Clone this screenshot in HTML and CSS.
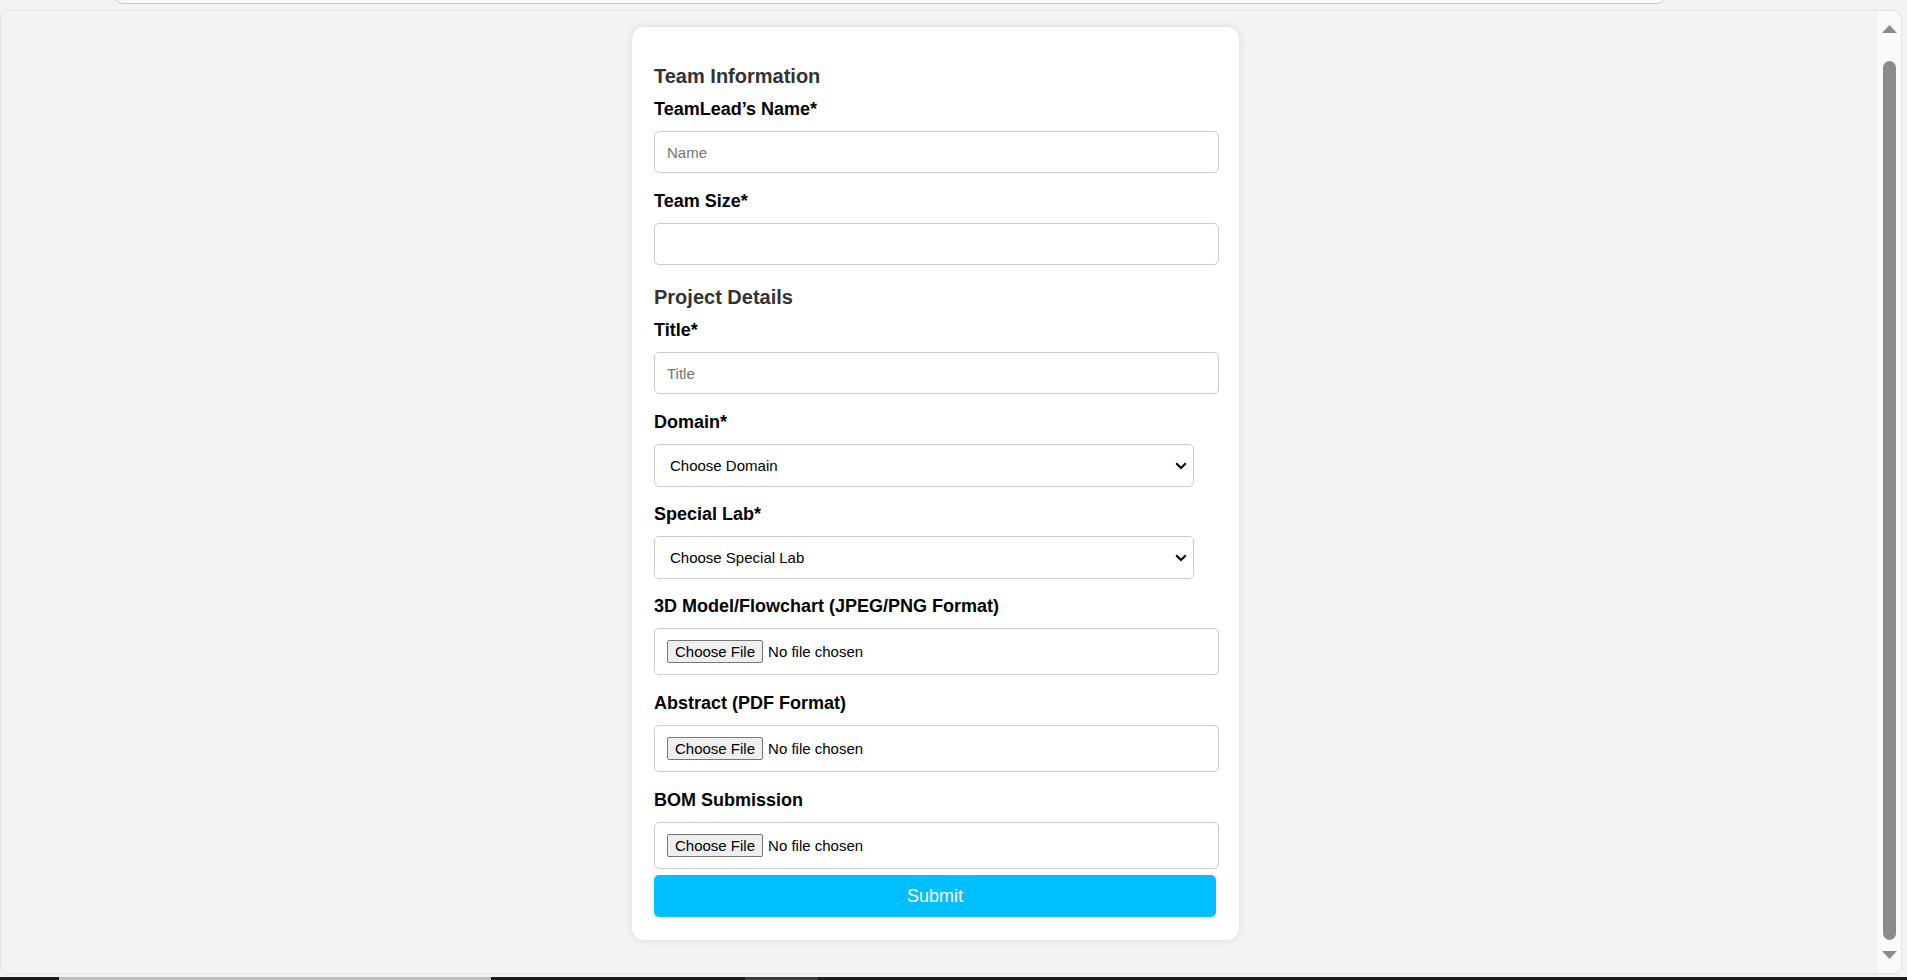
FILE: index.html
```html
<!DOCTYPE html>
<html lang="en">
<head>
<meta charset="utf-8">
<title>Project Registration</title>
<link rel="stylesheet" href="styles.css">
</head>
<body>
  <div class="topbar"><div class="tab"></div></div>
  <div class="window">
    <main class="viewport">
      <form class="card">
        <h3 class="section-title">Team Information</h3>
        <label class="field-label" for="lead">TeamLead’s Name*</label>
        <input class="text-input" id="lead" type="text" placeholder="Name">
        <label class="field-label" for="size">Team Size*</label>
        <input class="text-input" id="size" type="number">

        <h3 class="section-title second">Project Details</h3>
        <label class="field-label" for="title">Title*</label>
        <input class="text-input" id="title" type="text" placeholder="Title">
        <label class="field-label" for="domain">Domain*</label>
        <div class="select-wrap">
          <select class="select-input" id="domain">
            <option>Choose Domain</option>
          </select>
          <svg class="chevron" width="12" height="8" viewBox="0 0 12 8"><path d="M1.2 1.2 L6 6 L10.8 1.2" fill="none" stroke="#000" stroke-width="2"/></svg>
        </div>
        <label class="field-label" for="lab">Special Lab*</label>
        <div class="select-wrap">
          <select class="select-input" id="lab">
            <option>Choose Special Lab</option>
          </select>
          <svg class="chevron" width="12" height="8" viewBox="0 0 12 8"><path d="M1.2 1.2 L6 6 L10.8 1.2" fill="none" stroke="#000" stroke-width="2"/></svg>
        </div>
        <label class="field-label" for="model">3D Model/Flowchart (JPEG/PNG Format)</label>
        <input class="file-input" id="model" type="file">
        <label class="field-label" for="abstract">Abstract (PDF Format)</label>
        <input class="file-input" id="abstract" type="file">
        <label class="field-label" for="bom">BOM Submission</label>
        <input class="file-input last" id="bom" type="file">
        <button class="submit" type="button">Submit</button>
      </form>
    </main>
    <div class="scrollbar">
      <svg class="arrow" width="15" height="8" viewBox="0 0 15 8"><polygon points="7.5,0 15,8 0,8" fill="#8c8c8c"/></svg>
      <div class="thumb"></div>
      <svg class="arrow down" width="15" height="8" viewBox="0 0 15 8"><polygon points="0,0 15,0 7.5,8" fill="#8c8c8c"/></svg>
    </div>
  </div>
  <div class="taskbar">
    <span class="seg light"></span>
    <span class="seg gap"></span>
    <span class="seg mid"></span>
  </div>
</body>
</html>
```

FILE: styles.css
```css
html, body {
  margin: 0;
  height: 100%;
}

body {
  display: flex;
  flex-direction: column;
  overflow: hidden;
  background: #f3f3f3;
  font-family: "Liberation Sans", Arial, sans-serif;
}

.topbar {
  flex: none;
  height: 10px;
  padding-left: 115px;
  overflow: hidden;
}

.tab {
  width: 1550px;
  height: 20px;
  margin-top: -16px;
  box-sizing: border-box;
  border: 1px solid #c8c8c8;
  border-radius: 0 0 8px 8px;
  background: #fafafa;
}

.window {
  flex: 1;
  min-height: 0;
  display: flex;
  margin: 0 5px 3px 0;
  border: 1px solid #e2e2e2;
  border-radius: 8px 10px 8px 8px;
  overflow: hidden;
}

.viewport {
  flex: 1;
  display: flex;
  justify-content: center;
  align-items: flex-start;
  padding: 16px 8px 0 0;
  background: #f3f3f3;
}

.card {
  width: 607px;
  box-sizing: border-box;
  padding: 37px 20px 23px 22px;
  background: #fff;
  border-radius: 12px;
  box-shadow: 0 0 10px rgba(0, 0, 0, 0.1);
}

.section-title {
  margin: 0 0 9px;
  padding-top: 1px;
  font-size: 20px;
  line-height: 23px;
  font-weight: 700;
  color: #333;
}

.section-title.second {
  margin-top: 20px;
}

.field-label {
  display: block;
  padding-top: 2px;
  margin-bottom: 11px;
  font-size: 18px;
  line-height: 21px;
  font-weight: 700;
  color: #000;
}

.text-input {
  display: block;
  width: 565px;
  height: 42px;
  box-sizing: border-box;
  margin: 0 0 16px;
  padding: 0 12px;
  border: 1px solid #ccc;
  border-radius: 5px;
  font-family: inherit;
  font-size: 15px;
  color: #000;
  background: #fff;
}

.text-input::placeholder {
  color: #757575;
}

.select-wrap {
  position: relative;
  width: 540px;
  margin: 0 0 15px;
}

.select-input {
  display: block;
  width: 540px;
  height: 43px;
  box-sizing: border-box;
  margin: 0;
  padding: 0 30px 0 15px;
  border: 1px solid #ccc;
  border-radius: 5px;
  font-family: inherit;
  font-size: 15px;
  color: #000;
  background: #fff;
  -webkit-appearance: none;
  appearance: none;
}

.chevron {
  position: absolute;
  right: 7px;
  top: 18px;
  pointer-events: none;
}

.file-input {
  display: block;
  width: 565px;
  box-sizing: border-box;
  margin: 0 0 16px;
  padding: 11px 12px;
  border: 1px solid #ccc;
  border-radius: 5px;
  font-family: inherit;
  font-size: 15px;
  line-height: 17px;
  color: #000;
  background: #fff;
}

.file-input.last {
  margin-bottom: 6px;
}

.file-input::file-selector-button {
  height: 23px;
  margin: 0 5px 0 0;
  padding: 0 7px;
  border: 1px solid #767676;
  border-radius: 2px;
  background: #efefef;
  font-family: inherit;
  font-size: 15px;
  color: #000;
}

.submit {
  display: block;
  width: 562px;
  height: 42px;
  padding: 0;
  border: none;
  border-radius: 5px;
  background: #00bfff;
  color: #fff;
  font-family: inherit;
  font-size: 18px;
}

.scrollbar {
  flex: none;
  width: 23px;
  display: flex;
  flex-direction: column;
  align-items: center;
  padding: 14px 0;
  box-sizing: border-box;
  background: #fafafa;
}

.arrow {
  flex: none;
  display: block;
}

.thumb {
  flex: 1;
  width: 13px;
  margin: 28px 0 11px;
  border-radius: 7px;
  background: #8b8b8b;
}

.taskbar {
  flex: none;
  height: 3px;
  display: flex;
  padding-left: 59px;
  background: #1f1f1f;
}

.seg {
  display: block;
  height: 3px;
}

.seg.light {
  width: 432px;
  background: #bdbdbd;
}

.seg.gap {
  width: 254px;
}

.seg.mid {
  width: 73px;
  background: #3d3d3d;
}
```
